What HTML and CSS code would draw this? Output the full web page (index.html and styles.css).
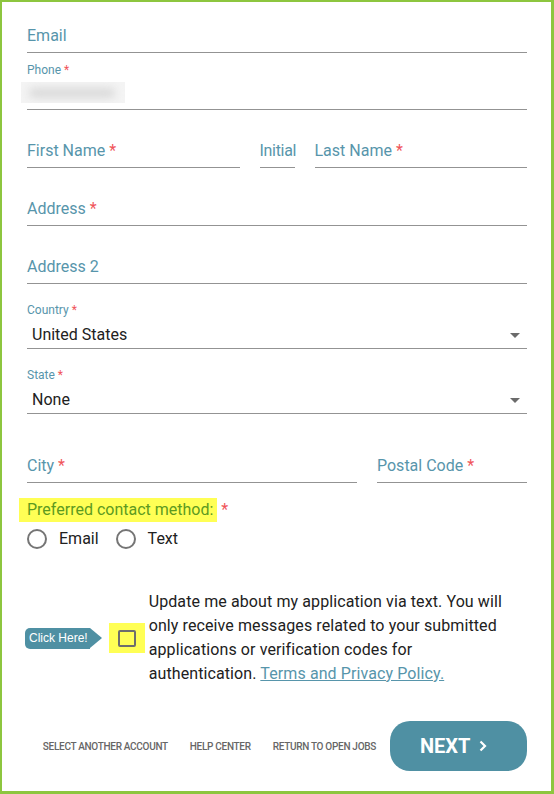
FILE: index.html
```html
<!DOCTYPE html>
<html lang="en">
<head>
    <meta charset="UTF-8">
    <meta name="viewport" content="width=device-width, initial-scale=1.0">
    <title>Contact Information</title>
    <link rel="stylesheet" href="styles.css">
</head>
<body>
    <div class="form-card">
        <div class="field field-email">
            <span class="placeholder">Email</span>
        </div>

        <div class="field field-phone">
            <label class="small-label">Phone <span class="req">*</span></label>
            <div class="blurred"></div>
        </div>

        <div class="row field-row">
            <div class="field grow"><span class="placeholder">First Name <span class="req">*</span></span></div>
            <div class="field initial"><span class="placeholder">Initial</span></div>
            <div class="field grow"><span class="placeholder">Last Name <span class="req">*</span></span></div>
        </div>

        <div class="field field-row"><span class="placeholder">Address <span class="req">*</span></span></div>
        <div class="field field-row"><span class="placeholder">Address 2</span></div>

        <div class="field select-field country">
            <label class="small-label">Country <span class="req">*</span></label>
            <div class="select-value">
                <span>United States</span>
                <svg class="caret" width="10" height="5" viewBox="0 0 10 5"><path d="M0 0h10L5 5z" fill="#6b6b6b"/></svg>
            </div>
        </div>

        <div class="field select-field state">
            <label class="small-label">State <span class="req">*</span></label>
            <div class="select-value">
                <span>None</span>
                <svg class="caret" width="10" height="5" viewBox="0 0 10 5"><path d="M0 0h10L5 5z" fill="#6b6b6b"/></svg>
            </div>
        </div>

        <div class="row city-row">
            <div class="field grow"><span class="placeholder">City <span class="req">*</span></span></div>
            <div class="field postal"><span class="placeholder">Postal Code <span class="req">*</span></span></div>
        </div>

        <div class="contact-label">
            <span class="marker">Preferred contact method:</span> <span class="req">*</span>
        </div>
        <div class="radio-group">
            <label class="radio"><span class="circle"></span>Email</label>
            <label class="radio"><span class="circle"></span>Text</label>
        </div>

        <div class="consent">
            <span class="badge">Click Here!</span>
            <span class="check-wrap"><span class="checkbox"></span></span>
            <p class="consent-text">Update me about my application via text. You will only receive messages related to your submitted applications or verification codes for authentication. <a href="#">Terms and Privacy Policy.</a></p>
        </div>

        <div class="footer">
            <nav class="footer-links">
                <a href="#">Select another account</a>
                <a href="#">Help Center</a>
                <a href="#">Return to open jobs</a>
            </nav>
            <button class="next-btn">NEXT
                <svg width="8" height="12" viewBox="0 0 8 12"><path d="M1.5 1.5L6 6l-4.5 4.5" fill="none" stroke="#fff" stroke-width="2.2"/></svg>
            </button>
        </div>
    </div>
</body>
</html>
```

FILE: styles.css
```css
:root {
    --teal: #4f90a3;
    --label: #5795ab;
    --line: #939393;
    --text: #212121;
    --red: #f0555a;
    --green: #8dc63f;
}

* {
    box-sizing: border-box;
}

html, body {
    margin: 0;
    padding: 0;
    background: #fff;
}

.form-card {
    height: 794px;
    border: solid var(--green);
    border-width: 2px 3px 3px 2px;
    padding: 0 24px 0 25px;
    font-family: Roboto, "Liberation Sans", sans-serif;
    color: var(--text);
}

.field {
    border-bottom: 1px solid var(--line);
}

.placeholder {
    display: block;
    font-size: 16px;
    line-height: 24px;
    color: var(--label);
    padding-bottom: 4px;
    white-space: nowrap;
}

.req {
    color: var(--red);
}

.small-label {
    display: block;
    font-size: 12px;
    line-height: 16px;
    color: var(--label);
}

.field-email {
    margin-top: 22px;
}

.field-phone {
    margin-top: 9px;
}

.blurred {
    position: relative;
    width: 104px;
    height: 21px;
    margin: 4px 0 6px -6px;
    background: #f4f4f4;
    overflow: hidden;
}

.blurred::before {
    content: "";
    position: absolute;
    left: 8px;
    right: 10px;
    top: 6px;
    bottom: 5px;
    background: #d9d9d9;
    border-radius: 6px;
    filter: blur(4px);
}

.field-row {
    margin-top: 29px;
}

.row {
    display: flex;
    gap: 20px;
}

.row .grow {
    flex: 1;
}

.initial {
    width: 35px;
}

.initial .placeholder {
    letter-spacing: -0.3px;
}

.select-field {
    margin-top: 18px;
}

.select-value {
    display: flex;
    align-items: center;
    justify-content: space-between;
    margin-top: 5px;
    padding: 0 7px 1px 5px;
    font-size: 16px;
    line-height: 24px;
}

.state {
    margin-top: 18px;
}

.city-row {
    margin-top: 40px;
}

.postal {
    width: 150px;
}

.contact-label {
    margin-top: 15px;
    font-size: 16px;
    line-height: 24px;
}

.marker {
    display: inline-block;
    background: #ffff55;
    color: #5d9a1f;
    margin-left: -8px;
    padding: 0 4px 0 8px;
}

.radio-group {
    display: flex;
    gap: 17px;
    margin-top: 5px;
    font-size: 16px;
    line-height: 24px;
}

.radio {
    display: flex;
    align-items: center;
    gap: 12px;
}

.circle {
    width: 20px;
    height: 20px;
    border: 2px solid #757575;
    border-radius: 50%;
}

.consent {
    display: flex;
    align-items: center;
    margin-top: 39px;
}

.badge {
    position: relative;
    flex-shrink: 0;
    height: 21px;
    margin-left: -2px;
    margin-right: 19px;
    padding: 0 2px 0 4px;
    background: var(--teal);
    border-radius: 5px 0 0 5px;
    color: #fff;
    font-family: "Liberation Sans", Arial, sans-serif;
    font-size: 12px;
    line-height: 21px;
    white-space: nowrap;
}

.badge::after {
    content: "";
    position: absolute;
    right: -12px;
    top: 0;
    border-left: 12px solid var(--teal);
    border-top: 10.5px solid transparent;
    border-bottom: 10.5px solid transparent;
}

.check-wrap {
    display: flex;
    align-items: center;
    justify-content: center;
    width: 36px;
    height: 30px;
    background: #ffff55;
    flex-shrink: 0;
}

.checkbox {
    width: 18px;
    height: 17px;
    border: 2px solid #6d6d6d;
    border-radius: 2px;
}

.consent-text {
    margin: 0 15px 0 4px;
    font-size: 16px;
    line-height: 24px;
    letter-spacing: 0.1px;
}

.consent-text a {
    color: var(--label);
}

.footer {
    display: flex;
    align-items: center;
    justify-content: flex-end;
    gap: 14px;
    margin-top: 35px;
}

.footer-links {
    display: flex;
    gap: 22px;
}

.footer-links a {
    font-size: 10px;
    font-weight: 500;
    letter-spacing: -0.3px;
    text-transform: uppercase;
    color: #666;
    text-decoration: none;
}

.next-btn {
    display: flex;
    align-items: center;
    gap: 9px;
    width: 137px;
    height: 50px;
    padding: 0 0 0 30px;
    border: none;
    border-radius: 20px;
    background: var(--teal);
    color: #fff;
    font-family: Roboto, sans-serif;
    font-size: 20px;
    font-weight: 700;
    cursor: pointer;
}
```
